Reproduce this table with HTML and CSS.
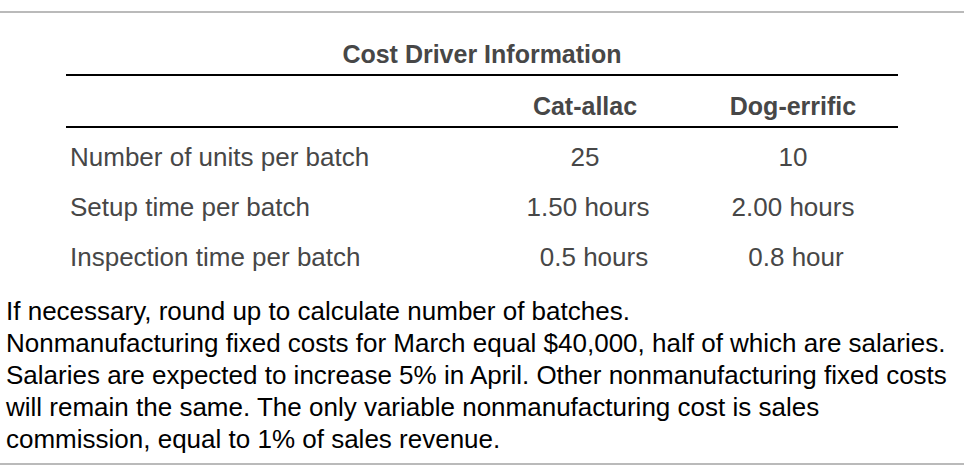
FILE: index.html
```html
<!DOCTYPE html>
<html>
<head>
<meta charset="utf-8">
<link rel="stylesheet" href="styles.css">
</head>
<body>
<div class="frame">
  <div class="table">
    <div class="title">Cost Driver Information</div>
    <div class="row head">
      <div class="label"></div>
      <div class="val">Cat-allac</div>
      <div class="val">Dog-errific</div>
    </div>
    <div class="row first">
      <div class="label">Number of units per batch</div>
      <div class="val">25</div>
      <div class="val">10</div>
    </div>
    <div class="row">
      <div class="label">Setup time per batch</div>
      <div class="val shift-s">1.50 hours</div>
      <div class="val">2.00 hours</div>
    </div>
    <div class="row">
      <div class="label">Inspection time per batch</div>
      <div class="val shift-l">0.5 hours</div>
      <div class="val shift-s">0.8 hour</div>
    </div>
  </div>
  <div class="notes">
    <p>If necessary, round up to calculate number of batches.</p>
    <p>Nonmanufacturing fixed costs for March equal $40,000, half of which are salaries. Salaries are expected to increase 5% in April. Other nonmanufacturing fixed costs will remain the same. The only variable nonmanufacturing cost is sales commission, equal to 1% of sales revenue.</p>
  </div>
</div>
</body>
</html>
```

FILE: styles.css
```css
html, body {
  margin: 0;
  padding: 0;
  background: #fff;
}
body {
  font-family: "Liberation Sans", Arial, sans-serif;
}
.frame {
  margin-top: 11px;
  border-top: 2px solid #bababa;
  border-bottom: 2px solid #bababa;
  width: 964px;
  box-sizing: border-box;
}
.table {
  margin-left: 66px;
  width: 832px;
  color: #474747;
  font-size: 26px;
}
.title {
  text-align: center;
  font-weight: bold;
  font-size: 25px;
  height: 61px;
  line-height: 82px;
  border-bottom: 2px solid #000;
}
.row {
  display: grid;
  grid-template-columns: 416px 206px 210px;
  height: 50px;
  box-sizing: border-box;
  padding-top: 8px;
  align-items: center;
}
.row.head {
  font-weight: bold;
  font-size: 25px;
  padding-top: 10px;
  border-bottom: 2px solid #000;
  height: 52px;
}
.label {
  padding-left: 4px;
}
.val {
  text-align: center;
}
.shift-s {
  padding-left: 6px;
}
.shift-l {
  padding-left: 18px;
}
.notes {
  margin-top: 17px;
  padding-left: 6px;
  font-size: 26px;
  line-height: 32px;
  color: #000;
  padding-bottom: 8px;
}
.notes p {
  margin: 0;
}
```
